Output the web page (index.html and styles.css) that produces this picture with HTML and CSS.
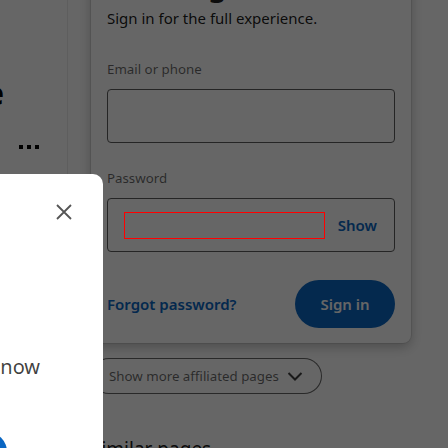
FILE: index.html
```html
<!DOCTYPE html>
<html lang="en">
<head>
<meta charset="utf-8">
<title>Sign in</title>
<link rel="stylesheet" href="styles.css">
</head>
<body>
<div class="page">
  <aside class="side">
    <div class="side-name"><span>Acme</span></div>
    <div class="dots"><i></i><i></i><i></i></div>
  </aside>
  <main class="main">
    <section class="card">
      <h1 class="card-title">Hello again</h1>
      <p class="card-sub">Sign in for the full experience.</p>
      <form class="form">
        <div class="field">
          <label class="label">Email or phone</label>
          <div class="input"></div>
        </div>
        <div class="field">
          <label class="label">Password</label>
          <div class="input input-pw">
            <div class="focus-box"></div>
            <span class="show">Show</span>
          </div>
        </div>
        <div class="actions">
          <a class="forgot">Forgot password?</a>
          <button type="button" class="btn-signin">Sign in</button>
        </div>
      </form>
    </section>
    <button type="button" class="more">
      <span>Show more affiliated pages</span>
      <svg width="16" height="16" viewBox="0 0 16 16"><path d="M1.5 5 L8 11.5 L14.5 5" fill="none" stroke="currentColor" stroke-width="2"/></svg>
    </button>
    <h2 class="similar">Similar pages</h2>
  </main>
</div>
<div class="overlay"></div>
<nav class="drawer">
  <div class="drawer-top">
    <svg class="close" width="16" height="16" viewBox="0 0 16 16"><path d="M1 1 L15 15 M15 1 L1 15" fill="none" stroke="currentColor" stroke-width="1.8"/></svg>
  </div>
  <a class="join">Join now</a>
  <div class="drawer-btn"></div>
</nav>
</body>
</html>
```
FILE: styles.css
```css
* { box-sizing: border-box; }
html, body { margin: 0; padding: 0; }
body {
  width: 448px;
  height: 448px;
  overflow: hidden;
  background: #fff;
  font-family: "Noto Sans", "Open Sans", sans-serif;
  color: rgba(0,0,0,0.9);
}
.page {
  display: flex;
  margin-top: -57px;
}
.side {
  width: 68px;
  flex: none;
  border-right: 1px solid #ebebeb;
  min-height: 520px;
  padding-top: 130px;
}
.side-name {
  width: 4px;
  direction: rtl;
  white-space: nowrap;
  font-size: 32px;
  line-height: 40px;
  font-weight: 700;
  color: #000;
}
.dots {
  display: flex;
  gap: 4px;
  padding-left: 19px;
  margin-top: 32px;
}
.dots i {
  width: 4px;
  height: 4px;
  background: #000;
}
.main {
  margin-left: 23px;
  width: 320px;
}
.card {
  background: #fff;
  border-radius: 8px;
  padding: 24px 16px 15px;
  box-shadow: 0 0 0 1px rgba(0,0,0,0.08), 0 4px 12px rgba(0,0,0,0.25);
}
.card-title {
  margin: 0;
  font-size: 30px;
  line-height: 36px;
  font-weight: 600;
}
.card-sub {
  margin: 3px 0 0;
  font-size: 15px;
  line-height: 24px;
}
.form {
  margin-top: 29px;
  display: flex;
  flex-direction: column;
  gap: 25px;
}
.label {
  display: block;
  font-size: 13.3px;
  line-height: 20px;
  color: rgba(0,0,0,0.6);
  margin-bottom: 10px;
}
.input {
  height: 54px;
  border: 1px solid #5c5c5c;
  border-radius: 4px;
}
.input-pw {
  display: flex;
  align-items: center;
  padding: 0 17px 0 16px;
}
.focus-box {
  position: relative;
  z-index: 30;
  width: 201px;
  height: 27px;
  border: 1px solid #ff0000;
}
.show {
  margin-left: auto;
  font-size: 15px;
  font-weight: 600;
  color: #0a66c2;
}
.actions {
  margin-top: 3px;
  display: flex;
  align-items: center;
  justify-content: space-between;
}
.forgot {
  font-size: 15px;
  font-weight: 600;
  color: #0a66c2;
}
.btn-signin {
  width: 100px;
  height: 48px;
  border: 0;
  border-radius: 24px;
  background: #0a66c2;
  color: #fff;
  font-family: inherit;
  font-size: 15px;
  font-weight: 600;
}
.more {
  margin-top: 15px;
  height: 36px;
  display: flex;
  align-items: center;
  gap: 8px;
  padding: 0 18px 0 17px;
  border: 1px solid rgba(0,0,0,0.6);
  border-radius: 18px;
  background: #fff;
  font-family: inherit;
  font-size: 13.3px;
  color: rgba(0,0,0,0.6);
  white-space: nowrap;
}
.more svg { flex: none; color: rgba(0,0,0,0.75); }
.similar {
  margin: 41px 0 0;
  font-size: 19px;
  line-height: 28px;
  font-weight: 400;
}
.overlay {
  position: fixed;
  inset: 0;
  background: rgba(0,0,0,0.6);
  z-index: 10;
}
.drawer {
  position: fixed;
  z-index: 20;
  top: 174px;
  left: -69px;
  width: 172px;
  bottom: 0;
  background: #fff;
  border-top-right-radius: 10px;
  padding: 30px 31px 0 29px;
}
.drawer-top {
  display: flex;
  justify-content: flex-end;
}
.close { color: #555; display: block; }
.join {
  display: block;
  margin-top: 133px;
  font-size: 20px;
  line-height: 28px;
  color: rgba(0,0,0,0.75);
  white-space: nowrap;
}
.drawer-btn {
  margin: 51px 0 0 7px;
  width: 40px;
  height: 40px;
  border-radius: 50%;
  background: #0a66c2;
}
```
